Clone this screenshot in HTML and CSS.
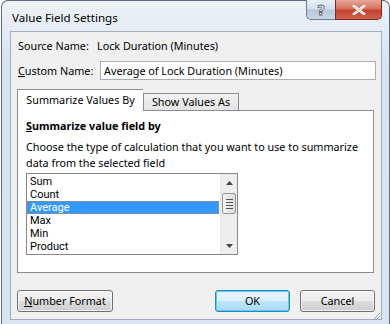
FILE: index.html
```html
<!DOCTYPE html>
<html>
<head>
<meta charset="utf-8">
<link rel="stylesheet" href="styles.css">
</head>
<body>
<div class="window">
  <div class="titlebar">
    <span class="title">Value Field Settings</span>
    <div class="caption">
      <div class="cap-btn help"><span>?</span></div>
      <div class="cap-btn close">
        <svg width="14" height="10" viewBox="0 0 14 10"><path d="M2 1 L12 9 M12 1 L2 9" stroke="#fff" stroke-width="2.6" stroke-linecap="square"/><path d="M2 1 L12 9 M12 1 L2 9" stroke="#5a2a24" stroke-width="0.6" opacity="0.4"/></svg>
      </div>
    </div>
  </div>
  <div class="client">
    <div class="row source">
      <span class="label">Source Name:</span>
      <span class="value">Lock Duration (Minutes)</span>
    </div>
    <div class="row custom">
      <span class="label"><u>C</u>ustom Name:</span>
      <div class="textbox">Average of Lock Duration (Minutes)</div>
    </div>
    <div class="tabs">
      <div class="tab active">Summarize Values By</div>
      <div class="tab">Show Values As</div>
    </div>
    <div class="panel">
      <div class="heading"><u>S</u>ummarize value field by</div>
      <div class="desc">Choose the type of calculation that you want to use to summarize data from the selected field</div>
      <div class="listbox">
        <ul class="items">
          <li>Sum</li>
          <li>Count</li>
          <li class="selected">Average</li>
          <li>Max</li>
          <li>Min</li>
          <li>Product</li>
        </ul>
        <div class="scrollbar">
          <div class="arrow up"><svg width="7" height="4" viewBox="0 0 7 4"><path d="M0 4 L3.5 0 L7 4 Z" fill="#444"/></svg></div>
          <div class="thumb"><span></span><span></span><span></span><span></span></div>
          <div class="track"></div>
          <div class="arrow down"><svg width="7" height="4" viewBox="0 0 7 4"><path d="M0 0 L3.5 4 L7 0 Z" fill="#444"/></svg></div>
        </div>
      </div>
    </div>
    <div class="buttons">
      <div class="btn numfmt"><u>N</u>umber Format</div>
      <div class="spacer"></div>
      <div class="btn ok">OK</div>
      <div class="btn cancel">Cancel</div>
    </div>
    <div class="grip">
      <svg width="10" height="10" viewBox="0 0 10 10"><path d="M9 2 L2 9 M9 5 L5 9 M9 8 L8 9" stroke="#9aa3ad" stroke-width="1"/></svg>
    </div>
  </div>
</div>
</body>
</html>
```
FILE: styles.css
```css
* { box-sizing: border-box; }
html, body { margin: 0; padding: 0; }
body {
  background: #ffffff;
  font-family: "Noto Sans", "Open Sans", sans-serif;
  font-size: 10.8px;
  color: #000;
  width: 390px;
  height: 324px;
  overflow: hidden;
}
.window {
  margin-left: 1px;
  width: 389px;
  height: 330px;
  border: 1px solid #5d6b7d;
  border-bottom: none;
  border-radius: 7px 7px 0 0;
  background: linear-gradient(180deg, #eef2f7 0px, #e4ebf3 30px, #d6e3f1 60px, #d8e5f2 100%);
  padding: 0 6px 0 8px;
  position: relative;
}
.titlebar {
  height: 30px;
  display: flex;
  align-items: flex-start;
  justify-content: space-between;
}
.title {
  margin-top: 9px;
  margin-left: 2px;
  font-size: 11.6px;
  line-height: 15px;
}
.caption {
  display: flex;
  margin-top: -1px;
  margin-right: 1px;
}
.cap-btn {
  height: 20px;
  border: 1px solid #6d7c90;
  border-top: none;
  display: flex;
  align-items: center;
  justify-content: center;
}
.help {
  width: 29px;
  border-radius: 0 0 0 5px;
  border-right: none;
  background: linear-gradient(180deg, #e9eff6 0%, #d6e0ec 45%, #b7c7da 55%, #c8d6e6 100%);
  font-weight: bold;
  font-size: 14px;
  font-family: "DejaVu Sans", sans-serif;
}
.help span {
  color: #f6f8fb;
  -webkit-text-stroke: 0.8px #4d5e75;
  line-height: 14px;
}
.close {
  width: 47px;
  border-radius: 0 0 5px 0;
  border-color: #7a2b24;
  background: linear-gradient(180deg, #e6a79b 0%, #d6735f 45%, #c2432f 55%, #d2604b 100%);
}
.client {
  width: 372px;
  height: 289px;
  border: 1px solid #a3acb8;
  background: #f0f0f0;
  padding: 0 7px 0 6px;
  position: relative;
}
.row {
  display: flex;
  align-items: center;
  padding-left: 1px;
  white-space: nowrap;
}
.row.source {
  margin-top: 6px;
  height: 15px;
  line-height: 15px;
}
.row.source .label { width: 79px; }
.row.custom {
  margin-top: 8px;
  height: 19px;
}
.row.custom .label { width: 82px; }
.textbox {
  flex: 1;
  margin-right: -2px;
  height: 19px;
  border: 1px solid #abadb3;
  background: #fff;
  padding-left: 3px;
  line-height: 17px;
}
.tabs {
  margin-top: 9px;
  display: flex;
  align-items: flex-end;
  height: 21px;
  position: relative;
  z-index: 1;
  white-space: nowrap;
}
.tab {
  border: 1px solid #898c95;
  border-bottom: none;
  height: 17px;
  line-height: 16px;
  background: linear-gradient(180deg, #f2f2f2, #e3e3e3);
  width: 96px;
  text-align: center;
}
.tab.active {
  width: 126px;
  line-height: 20px;
  background: #fff;
  border-right: none;
  margin-bottom: -1px;
  height: 22px;
}
.panel {
  width: 357px;
  height: 163px;
  border: 1px solid #898c95;
  background: #fff;
  padding: 7px 0 0 8px;
}
.heading {
  font-weight: bold;
  line-height: 16px;
}
.desc {
  margin-top: 5px;
  line-height: 16px;
  width: 346px;
}
.listbox {
  margin-top: 2px;
  width: 212px;
  height: 82px;
  border: 1px solid #828790;
  display: flex;
  background: #fff;
}
.items {
  list-style: none;
  margin: 0;
  padding: 0;
  flex: 1;
  padding-top: 1px;
  font-family: Roboto, "Noto Sans", sans-serif;
  font-size: 11px;
}
.items li {
  height: 13px;
  line-height: 13px;
  padding-left: 3px;
  margin-right: 1px;
}
.items li.selected {
  background: #3399ff;
  color: #fff;
  outline: 1px dotted #c08040;
  outline-offset: -1px;
}
.scrollbar {
  width: 17px;
  background: #eeeeee;
  border-left: 1px solid #e4e4e4;
  display: flex;
  flex-direction: column;
}
.arrow {
  height: 17px;
  display: flex;
  align-items: center;
  justify-content: center;
}
.thumb {
  margin: 2px 1px 0 1px;
  height: 21px;
  border: 1px solid #979797;
  border-radius: 2px;
  background: linear-gradient(90deg, #f3f3f3, #dcdcdc);
  display: flex;
  flex-direction: column;
  align-items: center;
  justify-content: center;
  gap: 2px;
}
.thumb span {
  width: 7px;
  height: 1px;
  background: #555;
}
.track { flex: 1; }
.buttons {
  margin-top: 17px;
  display: flex;
  gap: 10px;
}
.spacer { flex: 1; }
.btn {
  height: 22px;
  line-height: 20px;
  text-align: center;
  border: 1px solid #707070;
  border-radius: 3px;
  background: linear-gradient(180deg, #f2f2f2 0%, #ebebeb 50%, #dddddd 51%, #cfcfcf 100%);
  box-shadow: inset 0 0 0 1px rgba(255,255,255,0.7);
  white-space: nowrap;
}
.btn.numfmt { width: 96px; }
.btn.ok {
  width: 75px;
  border-color: #3c7fb1;
  box-shadow: inset 0 0 0 1px #48d5f5;
  background: linear-gradient(180deg, #eaf6fd 0%, #d9f0fc 50%, #bee6fd 51%, #a7d9f5 100%);
}
.btn.cancel { width: 75px; margin-right: -1px; }
.grip {
  position: absolute;
  right: 0;
  bottom: 0;
  width: 10px;
  height: 10px;
}
```
